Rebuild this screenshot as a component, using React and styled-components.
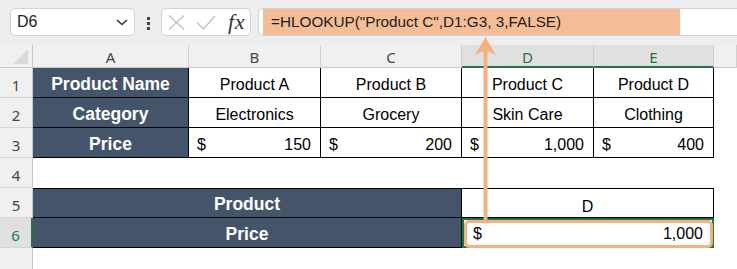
import React from "react";
import styled, { createGlobalStyle } from "styled-components";

const ORANGE = "#f4b183";
const GREEN = "#217346";
const DARK = "#44546a";

const GlobalStyle = createGlobalStyle`
  html, body {
    margin: 0;
    padding: 0;
    background: #fff;
    overflow: hidden;
  }
  body {
    font-family: "Liberation Sans", Arial, sans-serif;
  }
`;

const Page = styled.div`
  position: relative;
  width: 737px;
  height: 269px;
  overflow: hidden;
`;

/* ---------- formula bar ---------- */

const Toolbar = styled.div`
  display: flex;
  align-items: flex-start;
  height: 45px;
  box-sizing: border-box;
  padding: 8px 0 0 10px;
  background: #eeeef1;
`;

const Box = styled.div`
  display: flex;
  align-items: center;
  box-sizing: border-box;
  height: 28px;
  background: #fff;
  border: 1px solid #d2d2d6;
  border-radius: 5px;
`;

const NameBox = styled(Box)`
  width: 125px;
  padding: 0 6px;
  justify-content: space-between;
  font-size: 16px;
  color: #222;
`;

const Dots = styled.div`
  display: flex;
  flex-direction: column;
  gap: 2px;
  margin: 9px 11px 0 12px;
  span {
    width: 3px;
    height: 3px;
    background: #444;
  }
`;

const FxBox = styled(Box)`
  width: 90px;
  padding: 0 5px 0 6px;
  gap: 11px;
`;

const FxLabel = styled.span`
  margin-left: auto;
  font-family: "Liberation Serif", "Times New Roman", serif;
  font-style: italic;
  font-size: 22px;
  color: #333;
  letter-spacing: 0.5px;
`;

const FormulaBox = styled(Box)`
  flex: 1;
  margin-left: 7px;
  margin-right: -10px;
  padding-left: 4px;
  align-items: stretch;
`;

const FormulaFill = styled.div`
  display: flex;
  align-items: center;
  width: 417px;
  box-sizing: border-box;
  padding-left: 8px;
  background: #f5bd97;
  font-size: 15.3px;
  color: #1e1e1e;
  white-space: nowrap;
`;

/* ---------- sheet ---------- */

const Sheet = styled.div`
  display: grid;
  grid-template-columns: 33px 156px 132px 141px 132px 120px 1fr;
  grid-template-rows: 23px repeat(6, 30px) 30px;
`;

const Corner = styled.div`
  position: relative;
  background: #f0f0f0;
  border-right: 1px solid #c8c8c8;
  border-bottom: 1px solid #c8c8c8;
  box-sizing: border-box;
  svg {
    position: absolute;
    right: 4px;
    bottom: 3px;
  }
`;

const ColHead = styled.div`
  display: flex;
  align-items: center;
  justify-content: center;
  padding-top: 2px;
  box-sizing: border-box;
  font-family: "Noto Sans", "Open Sans", sans-serif;
  font-size: 15px;
  background: ${(p) => (p.$selected ? "#e0e0e0" : "#f0f0f0")};
  color: ${(p) => (p.$selected ? GREEN : "#444")};
  border-right: 1px solid #d0d0d0;
  border-bottom: ${(p) => (p.$selected ? `2px solid ${GREEN}` : "1px solid #c8c8c8")};
`;

const RowHead = styled.div`
  display: flex;
  align-items: flex-end;
  justify-content: center;
  padding-bottom: 2px;
  box-sizing: border-box;
  font-family: "Noto Sans", "Open Sans", sans-serif;
  font-size: 15px;
  background: ${(p) => (p.$selected ? "#e0e0e0" : "#f0f0f0")};
  color: ${(p) => (p.$selected ? GREEN : "#444")};
  border-bottom: 1px solid #d4d4d4;
  border-right: ${(p) => (p.$selected ? `2px solid ${GREEN}` : "1px solid #c8c8c8")};
`;

const Cell = styled.div`
  position: relative;
  grid-column: span ${(p) => p.$span || 1};
  display: flex;
  align-items: flex-end;
  justify-content: ${(p) => (p.$money ? "space-between" : "center")};
  box-sizing: border-box;
  padding: 0 ${(p) => (p.$money ? "9px 3px 8px" : `0 ${p.$low ? 1 : 3}px 0`)};
  font-size: 16px;
  color: #000;
  white-space: nowrap;
  ${(p) =>
    p.$bordered &&
    `
    border-right: 1px solid #000;
    border-bottom: 1px solid #000;
  `}
  ${(p) => p.$top && "border-top: 1px solid #000;"}
  ${(p) =>
    p.$dark &&
    `
    background: ${DARK};
    color: #fff;
    font-weight: 700;
    font-size: 17.5px;
    padding-bottom: 2px;
  `}
  ${(p) =>
    p.$selected &&
    `
    border: 2px solid ${GREEN};
    padding: 0 9px 3px 9px;
  `}
`;

const Highlight = styled.div`
  position: absolute;
  inset: 0 -1px -2px 0;
  border: 3px solid ${ORANGE};
  border-radius: 5px;
  pointer-events: none;
`;

const Overlay = styled.svg`
  position: absolute;
  left: 0;
  top: 0;
  pointer-events: none;
`;

const Money = ({ value, ...rest }) => (
  <Cell $bordered $money {...rest}>
    <span>$</span>
    <span>{value}</span>
  </Cell>
);

const columns = ["A", "B", "C", "D", "E", ""];
const selectedCols = ["D", "E"];

export default function App() {
  return (
    <Page>
      <GlobalStyle />
      <Toolbar>
        <NameBox>
          <span>D6</span>
          <svg width="12" height="8" viewBox="0 0 12 8">
            <polyline points="1,2 6,6.5 11,2" fill="none" stroke="#333" strokeWidth="1.5" />
          </svg>
        </NameBox>
        <Dots>
          <span />
          <span />
          <span />
        </Dots>
        <FxBox>
          <svg width="17" height="15" viewBox="0 0 17 15">
            <path d="M1 0.5 L16 14.5 M16 0.5 L1 14.5" stroke="#c3c3c3" strokeWidth="1.4" />
          </svg>
          <svg width="20" height="15" viewBox="0 0 20 15">
            <polyline points="1,7.5 7.5,14 19,1" fill="none" stroke="#c3c3c3" strokeWidth="1.4" />
          </svg>
          <FxLabel>fx</FxLabel>
        </FxBox>
        <FormulaBox>
          <FormulaFill>=HLOOKUP("Product C",D1:G3, 3,FALSE)</FormulaFill>
        </FormulaBox>
      </Toolbar>

      <Sheet>
        <Corner>
          <svg width="15" height="15" viewBox="0 0 15 15">
            <polygon points="15,0 15,15 0,15" fill="#dadada" />
          </svg>
        </Corner>
        {columns.map((c, i) => (
          <ColHead key={i} $selected={selectedCols.includes(c)}>
            {c}
          </ColHead>
        ))}

        <RowHead>1</RowHead>
        <Cell $bordered $dark>Product Name</Cell>
        <Cell $bordered>Product A</Cell>
        <Cell $bordered>Product B</Cell>
        <Cell $bordered>Product C</Cell>
        <Cell $bordered>Product D</Cell>
        <Cell />

        <RowHead>2</RowHead>
        <Cell $bordered $dark>Category</Cell>
        <Cell $bordered>Electronics</Cell>
        <Cell $bordered>Grocery</Cell>
        <Cell $bordered>Skin Care</Cell>
        <Cell $bordered>Clothing</Cell>
        <Cell />

        <RowHead>3</RowHead>
        <Cell $bordered $dark>Price</Cell>
        <Money value="150" />
        <Money value="200" />
        <Money value="1,000" />
        <Money value="400" />
        <Cell />

        <RowHead>4</RowHead>
        <Cell $span={6} />

        <RowHead>5</RowHead>
        <Cell $bordered $top $dark $span={3}>Product</Cell>
        <Cell $bordered $top $low $span={2}>D</Cell>
        <Cell />

        <RowHead $selected>6</RowHead>
        <Cell $bordered $dark $span={3}>Price</Cell>
        <Cell $money $selected $span={2}>
          <span>$</span>
          <span>1,000</span>
          <Highlight />
        </Cell>
        <Cell />

        <RowHead />
        <Cell $span={6} />
      </Sheet>

      <Overlay width="737" height="269" viewBox="0 0 737 269">
        <line x1="485.5" y1="48" x2="485.5" y2="220" stroke={ORANGE} strokeWidth="4" />
        <polygon points="485.5,37 475,55 485.5,50 496,55" fill={ORANGE} />
      </Overlay>
    </Page>
  );
}
